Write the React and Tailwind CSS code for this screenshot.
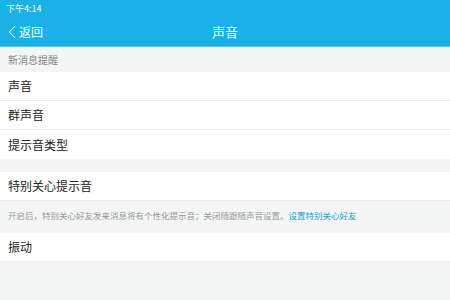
import { FiChevronLeft } from 'react-icons/fi';

const FONT = { fontFamily: '"Noto Sans CJK SC", "Noto Sans", sans-serif' };

const Row = ({ label, border = true }) => (
  <div
    className={`h-[29px] flex items-center pl-[8px] bg-white text-[12px] text-[#222] ${
      border ? 'border-b border-[#ececec]' : ''
    }`}
  >
    {label}
  </div>
);

const App = () => {
  return (
    <div className="w-[450px] h-[300px] bg-[#f4f5f5] overflow-hidden" style={FONT}>
      <div className="h-[47px] bg-[#1ab1e6] border-b border-[#5ec6e0] text-white">
        <div className="h-[18px] pl-[6px] pt-[2px] text-[9px] leading-[14px]">下午4:14</div>
        <div className="relative h-[28px] flex items-center">
          <div className="flex items-center pl-[1px] text-[12px]">
            <FiChevronLeft size={22} strokeWidth={1.1} className="-mr-[4px]" />
            返回
          </div>
          <div className="absolute left-0 right-0 text-center text-[13px]">声音</div>
        </div>
      </div>

      <div className="h-[25px] flex items-center pl-[8px] text-[10px] text-[#888]">新消息提醒</div>
      <Row label="声音" />
      <Row label="群声音" />
      <Row label="提示音类型" border={false} />

      <div className="h-[13px]" />
      <Row label="特别关心提示音" />
      <div className="h-[29px] flex items-center pl-[8px] text-[8.5px] text-[#999]">
        开启后，特别关心好友发来消息将有个性化提示音；关闭随跟随声音设置。
        <span className="text-[#1a9fd4]">设置特别关心好友</span>
      </div>
      <div className="h-[3px]" />
      <Row label="振动" />
    </div>
  );
};

export default App;
